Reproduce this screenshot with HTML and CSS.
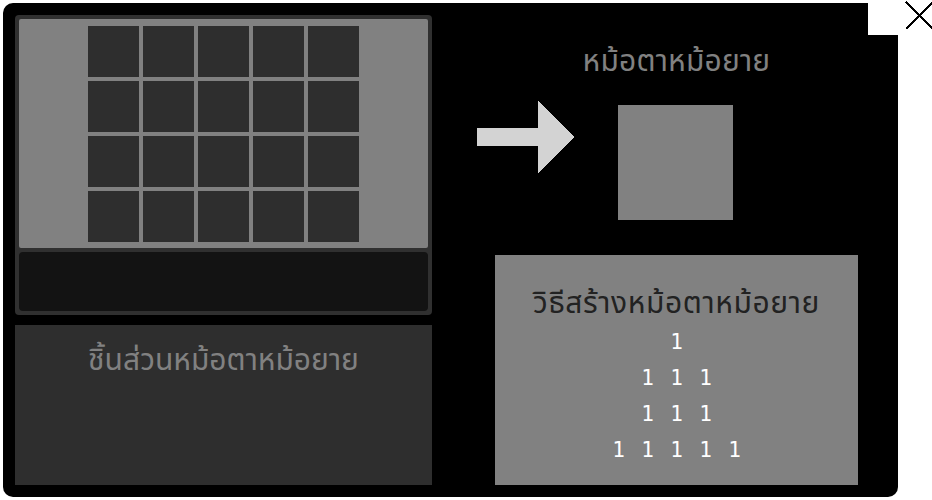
FILE: index.html
```html
<!DOCTYPE html>
<html lang="th">
<head>
    <meta charset="UTF-8">
    <meta name="viewport" content="width=device-width, initial-scale=1.0">
    <title>หม้อตาหม้อยาย</title>
    <link rel="stylesheet" href="styles.css">
</head>
<body>
    <div class="window">
        <div class="left-column">
            <div class="craft-panel">
                <div class="grid-area">
                    <div class="grid">
                        <div class="slot"></div><div class="slot"></div><div class="slot"></div><div class="slot"></div><div class="slot"></div>
                        <div class="slot"></div><div class="slot"></div><div class="slot"></div><div class="slot"></div><div class="slot"></div>
                        <div class="slot"></div><div class="slot"></div><div class="slot"></div><div class="slot"></div><div class="slot"></div>
                        <div class="slot"></div><div class="slot"></div><div class="slot"></div><div class="slot"></div><div class="slot"></div>
                    </div>
                </div>
                <div class="hotbar"></div>
            </div>
            <div class="parts-panel">
                <p class="parts-title">ชิ้นส่วนหม้อตาหม้อยาย</p>
            </div>
        </div>

        <div class="right-column">
            <h1 class="result-title">หม้อตาหม้อยาย</h1>
            <div class="result-row">
                <svg class="arrow" width="97" height="72" viewBox="0 0 97 72" shape-rendering="crispEdges">
                    <polygon points="0,27 61,27 61,0 97,36 61,72 61,45 0,45" fill="#d3d3d3"/>
                </svg>
                <div class="result-slot"></div>
            </div>
            <div class="recipe-panel">
                <h2 class="recipe-title">วิธีสร้างหม้อตาหม้อยาย</h2>
                <div class="recipe-row"><span>1</span></div>
                <div class="recipe-row"><span>1</span><span>1</span><span>1</span></div>
                <div class="recipe-row"><span>1</span><span>1</span><span>1</span></div>
                <div class="recipe-row"><span>1</span><span>1</span><span>1</span><span>1</span><span>1</span></div>
            </div>
        </div>

        <button class="close-button" aria-label="ปิด">
            <svg width="29" height="29" viewBox="0 0 29 29" shape-rendering="crispEdges">
                <path d="M1 1 L28 28 M28 1 L1 28" stroke="#000" stroke-width="2.5" fill="none"/>
            </svg>
        </button>
    </div>
</body>
</html>
```

FILE: styles.css
```css
body {
    margin: 0;
    background-color: #fff;
    font-family: "Noto Sans Thai", "Noto Sans", "DejaVu Sans", sans-serif;
}
.window {
    position: relative;
    box-sizing: border-box;
    width: 895px;
    height: 494px;
    margin: 3px;
    padding: 12px;
    background-color: #000;
    border-radius: 10px;
    display: flex;
}
.left-column {
    width: 417px;
    display: flex;
    flex-direction: column;
    gap: 10px;
}
.craft-panel {
    box-sizing: border-box;
    height: 300px;
    padding: 4px;
    background-color: #303030;
    border-radius: 4px;
    display: flex;
    flex-direction: column;
    gap: 4px;
}
.grid-area {
    height: 229px;
    background-color: #818181;
    border-radius: 2px;
    display: flex;
    justify-content: center;
    padding-top: 7px;
    box-sizing: border-box;
}
.grid {
    display: grid;
    grid-template-columns: repeat(5, 51px);
    grid-auto-rows: 51px;
    gap: 4px;
}
.slot {
    background-color: #2e2e2e;
}
.hotbar {
    flex: 1;
    background-color: #131313;
    border-radius: 4px;
}
.parts-panel {
    flex: 1;
    background-color: #2e2e2e;
}
.parts-title {
    margin: 0;
    padding-top: 16px;
    text-align: center;
    color: #818181;
    font-size: 30px;
    line-height: 40px;
}
.right-column {
    flex: 1;
    padding: 0 28px 0 63px;
    display: flex;
    flex-direction: column;
}
.result-title {
    margin: 27px 0 0;
    text-align: center;
    color: #818181;
    font-size: 30px;
    font-weight: normal;
    line-height: 40px;
    letter-spacing: 0.2px;
}
.result-row {
    display: flex;
    align-items: flex-start;
    gap: 44px;
    margin: 19px 0 0 -18px;
}
.arrow {
    display: block;
}
.result-slot {
    width: 115px;
    height: 115px;
    margin-top: 4px;
    background-color: #818181;
}
.recipe-panel {
    margin-top: 35px;
    height: 230px;
    background-color: #818181;
    display: flex;
    flex-direction: column;
    align-items: center;
}
.recipe-title {
    margin: 29px 0 0;
    color: #222;
    font-size: 30px;
    font-weight: normal;
    line-height: 40px;
    letter-spacing: 0.6px;
}
.recipe-row {
    display: flex;
    justify-content: center;
    height: 36px;
    line-height: 36px;
    color: #fff;
    font-family: "DejaVu Sans Mono", monospace;
    font-size: 21px;
}
.recipe-row span {
    width: 29px;
    text-align: center;
}
.close-button {
    position: absolute;
    top: -3px;
    right: -37px;
    width: 67px;
    height: 35px;
    padding: 1px 1px 0 0;
    border: none;
    background-color: #fff;
    display: flex;
    justify-content: flex-end;
    align-items: flex-start;
}
```
